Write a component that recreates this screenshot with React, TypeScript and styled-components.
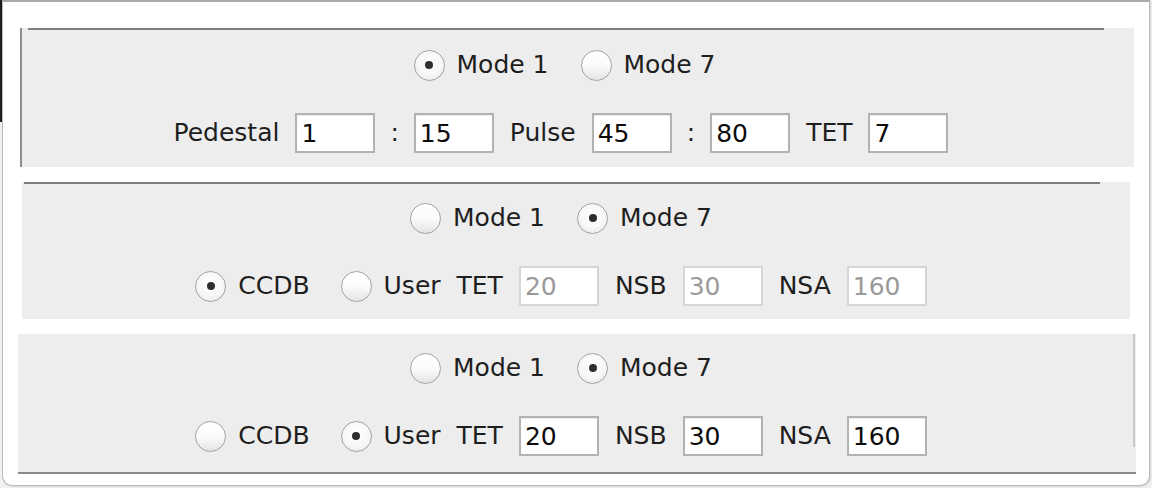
import React from "react";
import styled, { createGlobalStyle } from "styled-components";

const GlobalStyle = createGlobalStyle`
  html, body { margin: 0; padding: 0; background: #f2f2f2; }
  body { font-family: "DejaVu Sans", "Liberation Sans", sans-serif; }
`;

const Page = styled.div`
  position: relative;
  width: 1152px;
  height: 488px;
  overflow: hidden;
  &::before {
    content: "";
    position: absolute;
    left: 0;
    top: 0;
    width: 2px;
    height: 122px;
    background: #1b1f24;
  }
`;

const Window = styled.div`
  margin-left: 2px;
  width: 1148px;
  height: 486px;
  box-sizing: border-box;
  background: #ffffff;
  border: 1px solid #b8b8b8;
  border-top: 2px solid #a9a9a9;
  border-radius: 0 0 10px 10px;
  box-shadow: 1px 1px 2px rgba(0, 0, 0, 0.12);
  padding-top: 26px;
  display: flex;
  flex-direction: column;
  gap: 15px;
`;

const Panel = styled.section<{
  $left: number;
  $width: number;
  $leftBorder?: boolean;
}>`
  position: relative;
  margin-left: ${(p) => p.$left}px;
  width: ${(p) => p.$width}px;
  box-sizing: border-box;
  background: #ededed;
  border-left: ${(p) => (p.$leftBorder ? "2px solid #8e8e8e" : "none")};
  display: flex;
  flex-direction: column;
`;

const TopRule = styled.div<{ $ml: number; $mr: number }>`
  height: 2px;
  background: #7e7e7e;
  margin: 0 ${(p) => p.$mr}px 0 ${(p) => p.$ml}px;
`;

const BottomRule = styled.div`
  height: 2px;
  background: #8a8a8a;
`;

const SideShade = styled.div`
  position: absolute;
  right: 1px;
  top: 0;
  width: 2px;
  height: 113px;
  background: #c9c9c9;
`;

const Body = styled.div<{ $padL: number; $padR: number; $padT: number; $padB: number }>`
  padding: ${(p) => p.$padT}px ${(p) => p.$padR}px ${(p) => p.$padB}px ${(p) => p.$padL}px;
  display: flex;
  flex-direction: column;
  gap: 28px;
`;

const Row = styled.div<{ $gap?: number; $shift?: number }>`
  height: 40px;
  display: flex;
  align-items: center;
  justify-content: center;
  gap: ${(p) => p.$gap ?? 16}px;
  padding-left: ${(p) => p.$shift ?? 0}px;
`;

const Label = styled.span`
  font-size: 25px;
  color: #1e1e1e;
  line-height: 40px;
  white-space: nowrap;
`;

const RadioItem = styled.label`
  display: inline-flex;
  align-items: center;
  gap: 12px;
`;

const RadioCircle = styled.span<{ $on: boolean }>`
  width: 31px;
  height: 31px;
  box-sizing: border-box;
  border-radius: 50%;
  border: 1.5px solid #a3a3a3;
  background: ${(p) =>
    p.$on
      ? "radial-gradient(circle at 50% 40%, #ffffff 0%, #f7f7f7 55%, #e2e2e2 100%)"
      : "linear-gradient(#ffffff 0%, #fbfbfb 50%, #e4e4e4 100%)"};
  display: inline-flex;
  align-items: center;
  justify-content: center;
  &::after {
    content: "";
    width: 8px;
    height: 8px;
    border-radius: 50%;
    background: #2e2e2e;
    display: ${(p) => (p.$on ? "block" : "none")};
  }
`;

const Field = styled.input`
  width: 80px;
  height: 40px;
  box-sizing: border-box;
  margin: 0;
  border: 2px solid #b2b2b2;
  border-radius: 0;
  background: #ffffff;
  box-shadow: inset 0 1px 1px rgba(0, 0, 0, 0.08);
  padding: 0 0 0 4px;
  font-family: "DejaVu Sans", "Liberation Sans", sans-serif;
  font-size: 25px;
  color: #0c0c0c;
  outline: none;
  &:disabled {
    border-color: #d6d6d6;
    box-shadow: none;
    color: #9a9a9a;
    background: #ffffff;
  }
`;

const Colon = styled(Label)`
  margin: 0 -1px;
`;

function Radio({ on, text }: { on: boolean; text: string }) {
  return (
    <RadioItem>
      <RadioCircle $on={on} />
      <Label>{text}</Label>
    </RadioItem>
  );
}

function ModeRow({ mode7, shift }: { mode7: boolean; shift?: number }) {
  return (
    <Row $gap={32} $shift={shift}>
      <Radio on={!mode7} text="Mode 1" />
      <Radio on={mode7} text="Mode 7" />
    </Row>
  );
}

function SourceRow({ user }: { user: boolean }) {
  return (
    <Row>
      <Row $gap={31}>
        <Radio on={!user} text="CCDB" />
        <Radio on={user} text="User" />
      </Row>
      <Label>TET</Label>
      <Field value="20" disabled={!user} readOnly />
      <Label>NSB</Label>
      <Field value="30" disabled={!user} readOnly />
      <Label>NSA</Label>
      <Field value="160" disabled={!user} readOnly />
    </Row>
  );
}

export default function App() {
  return (
    <Page>
      <GlobalStyle />
      <Window>
        <Panel $left={17} $width={1114} $leftBorder>
          <TopRule $ml={6} $mr={30} />
          <Body $padL={0} $padR={34} $padT={15} $padB={14}>
            <ModeRow mode7={false} shift={7} />
            <Row>
              <Label>Pedestal</Label>
              <Field value="1" readOnly />
              <Colon>:</Colon>
              <Field value="15" readOnly />
              <Label>Pulse</Label>
              <Field value="45" readOnly />
              <Colon>:</Colon>
              <Field value="80" readOnly />
              <Label>TET</Label>
              <Field value="7" readOnly />
            </Row>
          </Body>
        </Panel>
        <Panel $left={19} $width={1108}>
          <TopRule $ml={2} $mr={30} />
          <Body $padL={0} $padR={30} $padT={14} $padB={13}>
            <ModeRow mode7 />
            <SourceRow user={false} />
          </Body>
        </Panel>
        <Panel $left={15} $width={1118}>
          <SideShade />
          <Body $padL={4} $padR={36} $padT={14} $padB={16}>
            <ModeRow mode7 />
            <SourceRow user />
          </Body>
          <BottomRule />
        </Panel>
      </Window>
    </Page>
  );
}
